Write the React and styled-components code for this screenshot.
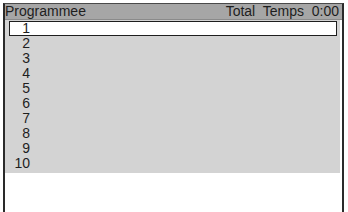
import React from 'react'
import styled, { createGlobalStyle } from 'styled-components'

const GlobalStyle = createGlobalStyle`
  html, body {
    margin: 0;
    padding: 0;
    background: #ffffff;
  }
  body {
    font-family: "Liberation Sans", Arial, sans-serif;
  }
`

const rows = [1, 2, 3, 4, 5, 6, 7, 8, 9, 10]

export default function App() {
    return (
        <>
            <GlobalStyle />
            <Frame>
                <Header>
                    <span>Programmee</span>
                    <HeaderRight>Total  Temps  0:00</HeaderRight>
                </Header>
                <List>
                    {rows.map((n) => (
                        <Row key={n} selected={n === 1}>
                            <Num>{n}</Num>
                        </Row>
                    ))}
                </List>
            </Frame>
        </>
    )
}

const Frame = styled.div`
    margin: 3px 0 0 3px;
    width: 337px;
    height: 209px;
    border-top: 1px solid #4a4a4a;
    border-left: 2px solid #2a2a2a;
    border-right: 2px solid #2a2a2a;
    background: #ffffff;
`

const Header = styled.div`
    display: flex;
    justify-content: space-between;
    align-items: center;
    height: 15px;
    background: #a6a6a6;
    border-bottom: 1px solid #8a8a8a;
    color: #1e1e1e;
    font-size: 14px;
    line-height: 15px;
    padding: 0 3px 0 0;
`

const HeaderRight = styled.span`
    white-space: pre;
`

const List = styled.div`
    display: flex;
    flex-direction: column;
    background: #d3d3d3;
    margin-right: 2px;
    padding: 1px 0 2px;
`

const Row = styled.div`
    display: flex;
    align-items: center;
    box-sizing: border-box;
    height: 15px;
    margin: 0 3px 0 4px;
    background: ${({ selected }) => (selected ? '#ffffff' : 'transparent')};
    border: 1px solid ${({ selected }) => (selected ? '#1e1e1e' : 'transparent')};
    color: #1e1e1e;
    font-size: 14px;
    line-height: 13px;
`

const Num = styled.span`
    width: 20px;
    text-align: right;
`
